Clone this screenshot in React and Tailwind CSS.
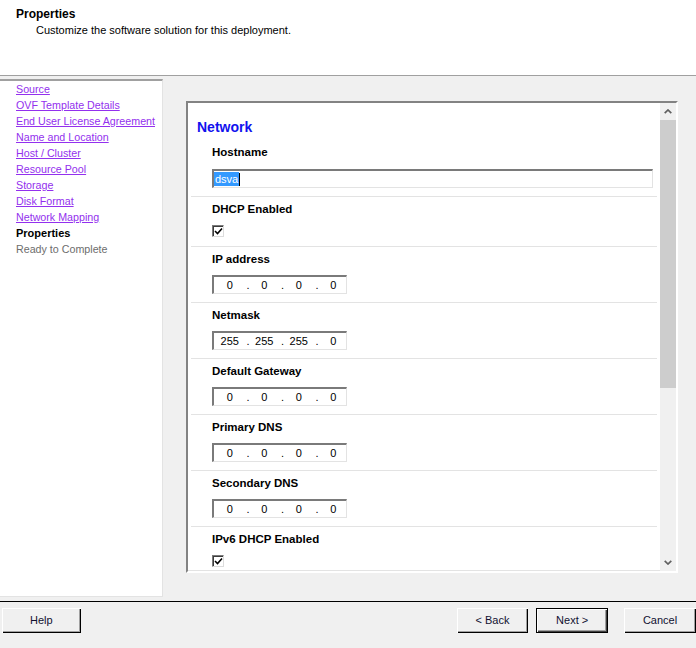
import React from "react";

const navItems = [
  "Source",
  "OVF Template Details",
  "End User License Agreement",
  "Name and Location",
  "Host / Cluster",
  "Resource Pool",
  "Storage",
  "Disk Format",
  "Network Mapping",
];

function Checkbox() {
  return (
    <div className="w-[12px] h-[12px] bg-white border-t border-l border-t-[#7a7a7a] border-l-[#7a7a7a] border-r border-b border-r-[#dcdcdc] border-b-[#dcdcdc] shadow-[inset_1px_1px_0_#3c3c3c] flex items-center justify-center">
      <svg width="9" height="9" viewBox="0 0 9 9">
        <polyline
          points="1,4 3.5,6.5 8,1.5"
          fill="none"
          stroke="#000"
          strokeWidth="1.6"
        />
      </svg>
    </div>
  );
}

function IpField({ value }) {
  return (
    <div className="w-[135px] h-[19px] bg-white border-t-2 border-l-2 border-t-[#7a7a7a] border-l-[#7a7a7a] border-r border-b border-r-[#e3e3e3] border-b-[#e3e3e3] flex items-center pl-[3px] text-[11px] leading-[15px] text-black">
      {value.map((v, i) => (
        <React.Fragment key={i}>
          <span className="w-[26px] text-center">{v}</span>
          {i < 3 && <span className="w-[9px] text-center pl-[2px]">.</span>}
        </React.Fragment>
      ))}
    </div>
  );
}

function Row({ label, children, checkbox }) {
  return (
    <div
      className={
        "border-t border-[#e3e3e3] pl-[21px] pt-[4px] " +
        (checkbox ? "pb-[9px]" : "pb-[8px]")
      }
    >
      <div className="text-[11.5px] leading-[16px] font-bold text-black">
        {label}
      </div>
      <div className="mt-[8px]">{children}</div>
    </div>
  );
}

function WinButton({ text, isDefault, className }) {
  return (
    <div
      className={
        "h-[25px] w-[72px] bg-[#f0f0f0] flex items-center justify-center text-[11px] text-[#101030] " +
        (isDefault
          ? "border border-black shadow-[inset_1px_1px_0_#fff,inset_-1px_-1px_0_#404040,inset_-2px_-2px_0_#a0a0a0] "
          : "shadow-[inset_1px_1px_0_#fff,inset_-1px_-1px_0_#000,inset_-2px_-2px_0_#a0a0a0] ") +
        (className || "")
      }
    >
      {text}
    </div>
  );
}

function Chevron({ down }) {
  return (
    <svg width="8" height="5" viewBox="0 0 8 5">
      <polyline
        points={down ? "0.7,0.8 4,4 7.3,0.8" : "0.7,4.2 4,1 7.3,4.2"}
        fill="none"
        stroke="#606060"
        strokeWidth="1.7"
      />
    </svg>
  );
}

export default function App() {
  return (
    <div className="w-[696px] h-[648px] bg-[#f0f0f0] flex flex-col overflow-hidden font-['Liberation_Sans',Arial,sans-serif] text-[11px] text-black">
      {/* header */}
      <div className="h-[76px] shrink-0 bg-white border-b border-[#a0a0a0] pt-[6px]">
        <div className="pl-[16px] text-[12px] leading-[16px] font-bold">
          Properties
        </div>
        <div className="pl-[36px] leading-[16px]">
          Customize the software solution for this deployment.
        </div>
      </div>

      {/* main area */}
      <div className="h-[525px] shrink-0 flex items-start">
        <div className="w-[163px] h-[518px] mt-[3px] bg-white border-t-2 border-t-[#a0a0a0] border-r border-r-[#e3e3e3] border-b border-b-[#e3e3e3] text-[10.7px]">
          {navItems.map((item) => (
            <div
              key={item}
              className="pl-[16px] leading-[16px] text-[#9330ee] underline"
            >
              {item}
            </div>
          ))}
          <div className="pl-[16px] leading-[16px] font-bold text-[11px]">Properties</div>
          <div className="pl-[16px] leading-[16px] text-[#6d6d6d]">
            Ready to Complete
          </div>
        </div>

        <div className="ml-[23px] mt-[25px] w-[492px] h-[472px] bg-white border-2 border-t-[#838383] border-l-[#838383] border-r-white border-b-white shadow-[inset_-1px_-1px_0_#e3e3e3] flex">
          <div className="flex-1 overflow-hidden pt-[16px]">
            <div className="pl-[9px] text-[14px] leading-[16px] font-bold text-[#1212ee]">
              Network
            </div>
            <div className="pl-[24px] mt-[9px] text-[11.5px] leading-[16px] font-bold">
              Hostname
            </div>
            <div className="ml-[24px] mt-[9px] mb-[8px] w-[441px] h-[19px] bg-white border-t-2 border-l-2 border-t-[#7a7a7a] border-l-[#7a7a7a] border-r border-b border-r-[#e3e3e3] border-b-[#e3e3e3] flex items-center">
              <span className="bg-[#3399ff] text-white leading-[14px] px-[1px]">
                dsva
              </span>
              <span className="w-[1px] h-[13px] bg-black" />
            </div>
            <div className="mx-[3px]">
              <Row label="DHCP Enabled" checkbox>
                <Checkbox />
              </Row>
              <Row label="IP address">
                <IpField value={["0", "0", "0", "0"]} />
              </Row>
              <Row label="Netmask">
                <IpField value={["255", "255", "255", "0"]} />
              </Row>
              <Row label="Default Gateway">
                <IpField value={["0", "0", "0", "0"]} />
              </Row>
              <Row label="Primary DNS">
                <IpField value={["0", "0", "0", "0"]} />
              </Row>
              <Row label="Secondary DNS">
                <IpField value={["0", "0", "0", "0"]} />
              </Row>
              <Row label="IPv6 DHCP Enabled" checkbox>
                <Checkbox />
              </Row>
            </div>
          </div>
          <div className="w-[16px] flex flex-col bg-[#f0f0f0]">
            <div className="h-[17px] flex items-center justify-center">
              <Chevron />
            </div>
            <div className="h-[268px] bg-[#cdcdcd]" />
            <div className="flex-1" />
            <div className="h-[17px] flex items-center justify-center">
              <Chevron down />
            </div>
          </div>
        </div>
      </div>

      {/* buttons */}
      <div className="flex-1 border-t border-black flex items-start pt-[6px]">
        <WinButton text="Help" className="ml-[2px] w-[79px]" />
        <WinButton text="< Back" className="ml-[376px]" />
        <WinButton text="Next >" isDefault className="ml-[8px]" />
        <WinButton text="Cancel" className="ml-[16px] shrink-0" />
      </div>
    </div>
  );
}
